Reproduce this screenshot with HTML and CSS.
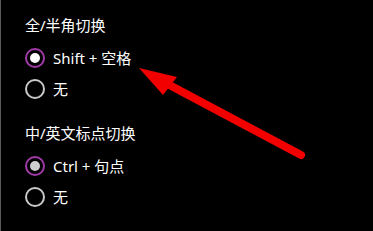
FILE: index.html
```html
<!DOCTYPE html>
<html lang="zh-CN">
<head>
    <meta charset="UTF-8">
    <title>输入法设置</title>
    <link rel="stylesheet" href="styles.css">
</head>
<body>
    <div class="panel">
        <div class="group">
            <div class="group-title">全/半角切换</div>
            <label class="option">
                <span class="radio checked"></span>
                <span>Shift + 空格</span>
            </label>
            <label class="option">
                <span class="radio"></span>
                <span>无</span>
            </label>
        </div>
        <div class="group">
            <div class="group-title">中/英文标点切换</div>
            <label class="option">
                <span class="radio checked dim"></span>
                <span>Ctrl + 句点</span>
            </label>
            <label class="option">
                <span class="radio"></span>
                <span>无</span>
            </label>
        </div>

        <svg class="arrow" width="373" height="231" viewBox="0 0 373 231">
            <line x1="301" y1="155" x2="160" y2="80" stroke="#f20000" stroke-width="8" stroke-linecap="round"/>
            <polygon points="139,68 177,77 163,95" fill="#f20000"/>
        </svg>
    </div>
</body>
</html>
```

FILE: styles.css
```css
body {
    margin: 0;
    background: #000;
    overflow: hidden;
}
.panel {
    position: relative;
    width: 372px;
    height: 231px;
    border-left: 1px solid #5a5a5a;
    color: #fff;
    font-family: "Noto Sans", "Noto Sans CJK SC", sans-serif;
    font-size: 15px;
}
.group {
    padding-left: 24px;
    padding-top: 15px;
}
.group + .group {
    padding-top: 19px;
}
.group-title {
    line-height: 20px;
    margin-bottom: 7px;
}
.option {
    display: flex;
    align-items: center;
    gap: 8px;
    height: 31px;
}
.radio {
    box-sizing: border-box;
    width: 20px;
    height: 20px;
    border: 2px solid #c8c8c8;
    border-radius: 50%;
    display: flex;
    justify-content: center;
    align-items: center;
}
.radio.checked {
    border-color: #a03aa6;
}
.radio.checked::after {
    content: "";
    width: 10px;
    height: 10px;
    border-radius: 50%;
    background: #fff;
}
.radio.dim::after {
    background: #cfcfcf;
}
.arrow {
    position: absolute;
    left: -1px;
    top: 0;
}
```
